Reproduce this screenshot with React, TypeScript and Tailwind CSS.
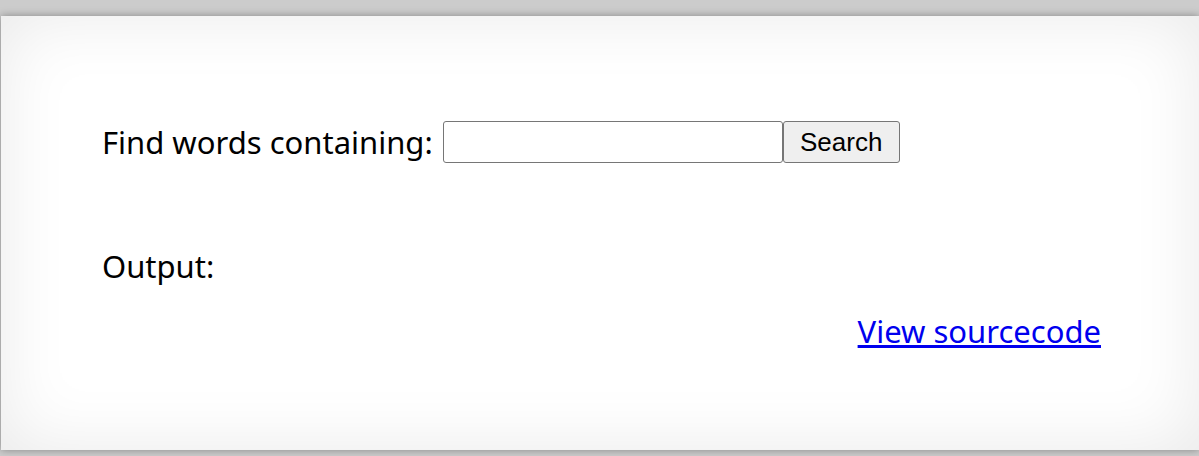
export default function App() {
  return (
    <div className="h-[456px] w-full overflow-hidden bg-[#cccccc] pt-[16px] pl-[1px]">
      <div className="h-[434px] w-full bg-white px-[101px] pt-[105px] shadow-[inset_0_0_70px_rgba(0,0,0,0.09),0_0_8px_rgba(0,0,0,0.35)] font-['Noto_Sans',sans-serif] text-[31px] text-black">
        <div className="flex items-center">
          <span className="leading-[41px]">Find words containing:</span>
          <input
            type="text"
            className="ml-[10px] h-[42px] w-[340px] rounded-[3px] border border-[#767676] bg-white"
          />
          <button className="h-[42px] w-[117px] rounded-[3px] border border-[#767676] bg-[#efefef] font-['Liberation_Sans',sans-serif] text-[26px] leading-none">
            Search
          </button>
        </div>
        <p className="mt-[82px] leading-[42px]">Output:</p>
        <div className="-mr-[3px] mt-[23px] flex justify-end">
          <a href="#" className="leading-[42px] text-[#0000ee] underline">
            View sourcecode
          </a>
        </div>
      </div>
    </div>
  );
}
